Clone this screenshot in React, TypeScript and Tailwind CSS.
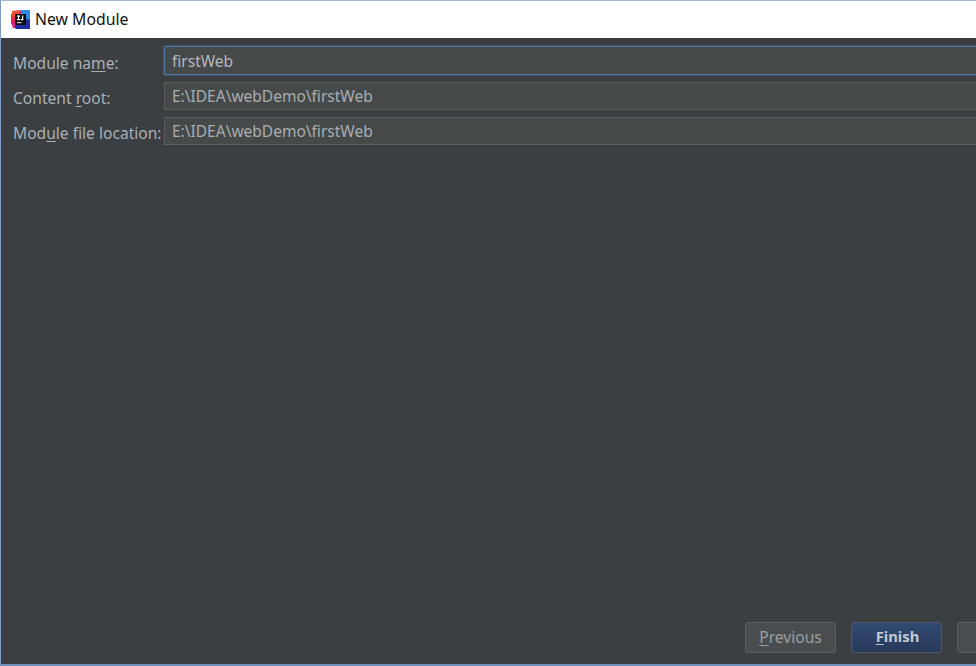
const font = { fontFamily: '"Noto Sans", "Open Sans", sans-serif' };

const fields = [
  { label: "Module na", key: "m", rest: "e:", value: "firstWeb", active: true },
  { label: "Content ", key: "r", rest: "oot:", value: "E:\\IDEA\\webDemo\\firstWeb", active: false },
  { label: "Mod", key: "u", rest: "le file location:", value: "E:\\IDEA\\webDemo\\firstWeb", active: false },
];

function IdeaLogo() {
  return (
    <svg width="21" height="21" viewBox="0 0 21 21" className="shrink-0">
      <path d="M1 5 L11 1 L13 9 L4 19 L1 14 Z" fill="#e8234f" />
      <path d="M2 2 L10 1 L9 8 L2 8 Z" fill="#f0502f" />
      <path d="M10 1 L20 1 L20 12 L13 9 Z" fill="#2a8be8" />
      <path d="M3 17 L13 9 L20 11 L20 20 L6 20 Z" fill="#1d2f9f" />
      <path d="M1 13 L5 13 L5 19 L3 19 Z" fill="#d81f8a" />
      <rect x="5" y="5" width="11" height="11" fill="#0b0b10" />
      <rect x="7" y="6.5" width="3" height="1.2" fill="#fff" />
      <rect x="8" y="6.5" width="1.1" height="4.5" fill="#fff" />
      <rect x="7" y="10" width="3" height="1.2" fill="#fff" />
      <rect x="12" y="6.5" width="1.2" height="4.5" fill="#fff" />
      <rect x="10.5" y="10" width="2.7" height="1.2" fill="#fff" />
      <rect x="7" y="13.2" width="4.5" height="1" fill="#fff" />
    </svg>
  );
}

export default function App() {
  return (
    <div
      className="flex h-[666px] w-[976px] flex-col overflow-hidden border-t border-l border-b-2 border-t-[#a3b8dc] border-l-[#7f9cc8] border-b-[#6f8fbd] bg-[#3c3f41]"
      style={font}
    >
      <div className="flex h-[37px] shrink-0 items-center gap-[4px] bg-white pl-[9px] text-[15.8px] text-[#111]">
        <IdeaLogo />
        <span>New Module</span>
      </div>

      <div className="flex w-[1100px] flex-col gap-[7px] pl-[12px] pt-[8px]">
        {fields.map((f) => (
          <div key={f.value + f.label} className="flex items-center">
            <label
              className={
                f.active
                  ? "w-[150px] shrink-0 whitespace-nowrap pt-[6px] text-[15.6px] text-[#a9b0b5]"
                  : "w-[150px] shrink-0 whitespace-nowrap pt-[4px] text-[15.6px] text-[#a9b0b5]"
              }
            >
              {f.label}
              <span className="underline underline-offset-2">{f.key}</span>
              {f.rest}
            </label>
            <div
              className={
                f.active
                  ? "ml-[1px] flex h-[29px] w-[900px] items-center rounded-[2px] border border-[#4f7aa6] bg-[#45494a] pl-[7px] pt-[1px] text-[15.5px] text-[#b4b8ba] shadow-[0_0_0_1px_#3f5468]"
                  : "ml-[1px] flex h-[28px] w-[900px] items-center border border-[#5a5d5f] bg-[#45494a] pl-[7px] text-[15.5px] text-[#a9adaf]"
              }
            >
              {f.value}
            </div>
          </div>
        ))}
      </div>

      <div className="mt-auto mb-[11px] flex w-[1100px] gap-[15px] pl-[744px]">
        <button className="flex h-[31px] w-[91px] shrink-0 items-center justify-center rounded-[3px] border border-[#5c5f61] bg-[#4a4d4f] pt-[1px] text-[15.6px] text-[#9a9fa2]">
          <span>
            <span className="underline underline-offset-2">P</span>revious
          </span>
        </button>
        <button className="flex h-[31px] w-[91px] shrink-0 items-center justify-center rounded-[3px] border border-[#4a5a6c] bg-gradient-to-b from-[#334b71] to-[#27395a] pb-[3px] pl-[2px] text-[14.8px] font-bold text-[#c3c9d0]">
          <span>
            <span className="underline underline-offset-2">F</span>inish
          </span>
        </button>
        <button className="h-[31px] w-[91px] shrink-0 rounded-[3px] border border-[#5c5f61] bg-[#4a4d4f]" />
      </div>
    </div>
  );
}
